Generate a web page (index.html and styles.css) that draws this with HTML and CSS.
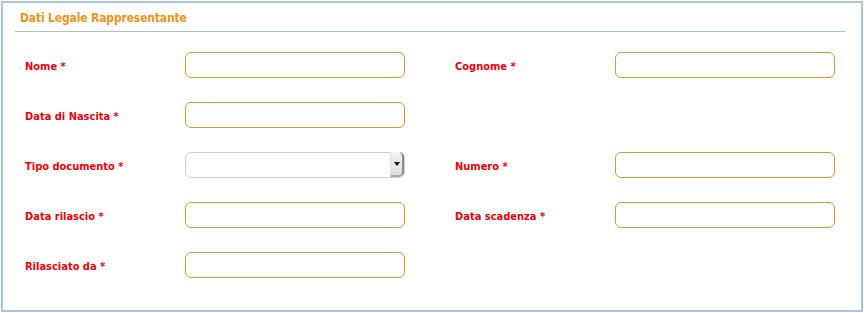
FILE: index.html
```html
<!DOCTYPE html>
<html lang="it">

<head>
    <meta charset="UTF-8">
    <meta name="viewport" content="width=device-width, initial-scale=1.0">
    <title>Dati Legale Rappresentante</title>
    <link rel="stylesheet" href="styles.css">
</head>

<body>
    <div class="panel">
        <div class="panel-head">Dati Legale Rappresentante</div>

        <div class="form-grid">
            <label for="nome">Nome *</label>
            <input type="text" id="nome" name="nome">
            <label for="cognome" class="col-right">Cognome *</label>
            <input type="text" id="cognome" name="cognome">

            <label for="nascita">Data di Nascita *</label>
            <input type="text" id="nascita" name="nascita">
            <span></span>
            <span></span>

            <label for="tipodoc">Tipo documento *</label>
            <div class="select-wrap">
                <select id="tipodoc" name="tipodoc">
                    <option value=""></option>
                    <option value="ci">Carta d'identità</option>
                    <option value="pass">Passaporto</option>
                    <option value="pat">Patente</option>
                </select>
                <span class="select-btn"></span>
            </div>
            <label for="numero" class="col-right">Numero *</label>
            <input type="text" id="numero" name="numero">

            <label for="rilascio">Data rilascio *</label>
            <input type="text" id="rilascio" name="rilascio">
            <label for="scadenza" class="col-right">Data scadenza *</label>
            <input type="text" id="scadenza" name="scadenza">

            <label for="rilasciatoda">Rilasciato da *</label>
            <input type="text" id="rilasciatoda" name="rilasciatoda">
        </div>
    </div>
</body>

</html>
```

FILE: styles.css
```css
body {
    margin: 0;
    padding: 1px;
    background: #fff;
    font-family: "DejaVu Sans Condensed", "DejaVu Sans", sans-serif;
    font-weight: bold;
}

.panel {
    height: 311px;
    box-sizing: border-box;
    border: 2px solid #a9c3da;
}

.panel-head {
    margin: 0 15px 0 12px;
    padding: 8px 5px 5px 5px;
    border-bottom: 1px solid #a9c0d6;
    color: #ef9419;
    font-size: 12px;
    line-height: 15px;
    letter-spacing: -0.15px;
}

.form-grid {
    display: grid;
    grid-template-columns: 160px 220px 210px 220px;
    grid-auto-rows: 26px;
    row-gap: 24px;
    padding: 20px 0 0 22px;
    align-items: center;
}

.form-grid label {
    color: #ec0009;
    font-size: 11px;
    line-height: 15px;
    padding-top: 2px;
}

.form-grid .col-right {
    padding-left: 50px;
}

input[type="text"] {
    height: 26px;
    width: 220px;
    box-sizing: border-box;
    border: 1px solid #d39a34;
    border-radius: 6px;
    background: #fff;
    padding: 0 6px;
    font: normal 12px "DejaVu Sans", sans-serif;
    outline: none;
}

.select-wrap {
    position: relative;
    width: 220px;
    height: 26px;
}

.select-wrap select {
    appearance: none;
    -webkit-appearance: none;
    width: 100%;
    height: 100%;
    box-sizing: border-box;
    border: 1px solid #cfcfcf;
    border-radius: 6px;
    background: #fff;
    padding: 0 20px 0 6px;
    font: normal 12px "DejaVu Sans", sans-serif;
    outline: none;
}

.select-btn {
    position: absolute;
    top: 0;
    right: 1px;
    width: 14px;
    height: 25px;
    box-sizing: border-box;
    background: linear-gradient(#f4f4f4, #dcdcdc);
    border-left: 1px solid #e2e2e2;
    border-right: 2px solid #8a8a8a;
    border-bottom: 2px solid #a8a8a8;
    border-radius: 0 5px 5px 0;
    pointer-events: none;
}

.select-btn::after {
    content: "";
    position: absolute;
    left: 3px;
    top: 10px;
    border-left: 3px solid transparent;
    border-right: 3px solid transparent;
    border-top: 4px solid #111;
}
```
